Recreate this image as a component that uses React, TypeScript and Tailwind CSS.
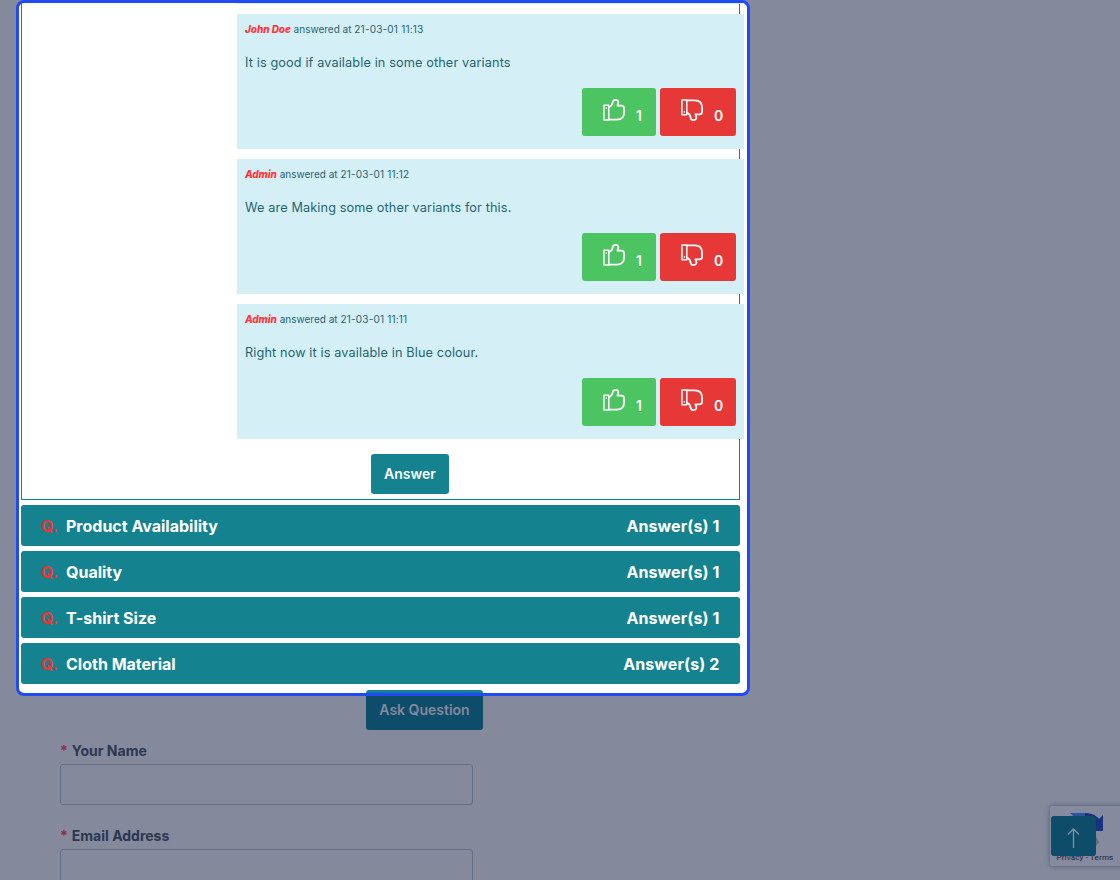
const answers = [
  { author: "John Doe", time: "21-03-01 11:13", text: "It is good if available in some other variants", up: 1, down: 0 },
  { author: "Admin", time: "21-03-01 11:12", text: "We are Making some other variants for this.", up: 1, down: 0 },
  { author: "Admin", time: "21-03-01 11:11", text: "Right now it is available in Blue colour.", up: 1, down: 0 },
];

const questions = [
  { title: "Product Availability", count: 1 },
  { title: "Quality", count: 1 },
  { title: "T-shirt Size", count: 1 },
  { title: "Cloth Material", count: 2 },
];

function Thumb({ className = "" }: { className?: string }) {
  return (
    <svg viewBox="0 0 22 22" className={`h-[22px] w-[22px] ${className}`} fill="none" stroke="currentColor" strokeWidth="1.75" strokeLinejoin="round">
      <path d="M.9 6.3H5.8V21.1H.9Z" strokeWidth="1.5" />
      <path d="M3.3 8.2V10" strokeWidth="1" />
      <path d="M6 8.1C8.3 7.3 9.4 5.4 9.7 3.2C9.9 1.3 11 .9 12.6.9C15.7.9 16.1 3 14.4 6.6H18.3C20.5 6.6 21.1 7.7 21.1 9.3V13C21.1 18 18.8 20.6 14 20.6H6" />
    </svg>
  );
}

function AnswerCard({ author, time, text, up, down }: (typeof answers)[number]) {
  return (
    <article className="flex h-[135px] w-[507px] flex-col bg-[#d5eff6] px-2 pt-2 text-[#1f6673]">
      <p className="text-[10px] leading-[15px]">
        <b className="font-extrabold italic tracking-[-0.07px] text-[#ff3538]">{author}</b> answered at{" "}
        <span className="tracking-[0.2px]">{time}</span>
      </p>
      <p className="mt-[15px] text-[12.7px] leading-[21px] tracking-[0.13px]">{text}</p>
      <div className="mt-[15px] flex justify-end gap-1 text-sm font-semibold text-white">
        <button className="flex h-12 w-[74px] items-start rounded-[3px] bg-[#4bc461] pl-[21px] pt-[11px]">
          <Thumb />
          <span className="ml-[11px] mt-[7px] leading-5">{up}</span>
        </button>
        <button className="flex h-12 w-[76px] items-start rounded-[3px] bg-[#e63937] pl-[21px] pt-[11px]">
          <Thumb className="-scale-y-100" />
          <span className="ml-[11px] mt-[7px] leading-5">{down}</span>
        </button>
      </div>
    </article>
  );
}

function Field({ label }: { label: string }) {
  return (
    <label className="block h-[85px] w-[413px]">
      <span className="flex h-[23px] gap-1 pt-px text-sm font-bold leading-[17px] text-[#2b3752]">
        <span className="text-[#922d43]">*</span>
        {label}
      </span>
      <input className="block h-[41px] w-full rounded-[3px] border border-[#656e83] bg-transparent" />
    </label>
  );
}

export default function App() {
  return (
    <main className="relative h-[880px] w-[1120px] overflow-hidden bg-[#84899c] font-['Inter',sans-serif]">
      <section className="ml-4 h-[696px] w-[734px] rounded-lg border-[3px] border-[#204af4] bg-white pl-0.5">
        <div className="h-[497px] w-[719px] border border-t-0 border-[#14838f]">
          <div className="ml-[215px] w-[507px] space-y-2.5">
            <div className="h-px bg-[#d5eff6]" />
            {answers.map((a) => (
              <AnswerCard key={a.time} {...a} />
            ))}
          </div>
          <button className="ml-[349px] mt-[15px] block h-10 w-[78px] rounded-[3px] bg-[#14838f] text-sm font-semibold text-white">
            Answer
          </button>
        </div>

        <ul className="mt-[5px] w-[719px] space-y-[5px]">
          {questions.map((q) => (
            <li key={q.title} className="flex h-[41px] items-center rounded-[3px] bg-[#14838f] px-5 pt-px text-base font-bold text-white">
              <span className="w-[25px] text-[#e63937]">Q.</span>
              <span className="flex-1">{q.title}</span>
              <span className="mr-[0.5px] tracking-[0.1px]">Answer(s) {q.count}</span>
            </li>
          ))}
        </ul>
        {/* top edge of the ask button, still inside the highlighted area */}
        <div className="ml-[345px] mt-1.5 h-[3px] w-[117px] rounded-t-[3px] bg-[#14838f]" />
      </section>

      <button className="ml-[366px] block h-[34px] w-[117px] rounded-b-[3px] bg-[#0d4d69] pb-1.5 text-sm font-semibold text-[#84899c]">
        Ask Question
      </button>

      <form className="ml-[60px] mt-[11px]">
        <Field label="Your Name" />
        <Field label="Email Address" />
      </form>

      <aside className="absolute left-[1050px] top-[806px] h-[60px] w-[90px] rounded-xs bg-[#858a9e] shadow-[0_0_5px_#50586f]">
        <svg viewBox="0 0 70 60" className="h-[60px] w-[70px]">
          <path d="M20 7H36V16H29Z" fill="#2c55a4" />
          <path d="M35 7C41 7 46 9 49 13L53 9V25H36Z" fill="#17327f" />
          <path d="M45 29L49 36L45 42Z" fill="#656b80" />
        </svg>
        <span className="absolute left-[6.5px] top-[47px] whitespace-nowrap font-['Roboto',sans-serif] text-[8px] leading-[10px] tracking-[0.17px] text-[#172033]">
          Privacy - Terms
        </span>
      </aside>
      <button aria-label="Back to top" className="absolute left-[1051px] top-[816px] flex h-10 w-[45px] items-center justify-center rounded-[3px] bg-[#0d4d69] pt-[3px] text-[#848fa3]">
        <svg viewBox="0 0 13 20" className="h-5 w-[13px]" fill="none" stroke="currentColor" strokeWidth="1.3">
          <path d="M6.5 20V1M1 6.5L6.5 1L12 6.5" />
        </svg>
      </button>
    </main>
  );
}
